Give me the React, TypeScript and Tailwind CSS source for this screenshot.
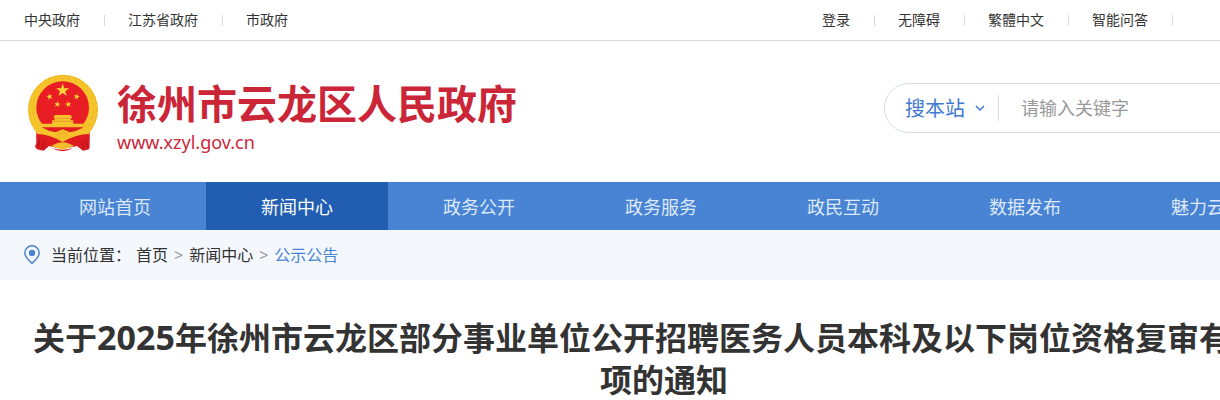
import { useState } from "react";

interface ILink {
  text: string;
  href: string;
}

const leftLinks: ILink[] = [
  { text: "中央政府", href: "#gov" },
  { text: "江苏省政府", href: "#jiangsu" },
  { text: "市政府", href: "#xuzhou" },
];

const rightLinks: ILink[] = [
  { text: "登录", href: "#login" },
  { text: "无障碍", href: "#access" },
  { text: "繁體中文", href: "#hant" },
  { text: "智能问答", href: "#ask" },
];

const navLinks: ILink[] = [
  { text: "网站首页", href: "#home" },
  { text: "新闻中心", href: "#news" },
  { text: "政务公开", href: "#open" },
  { text: "政务服务", href: "#service" },
  { text: "政民互动", href: "#interact" },
  { text: "数据发布", href: "#data" },
  { text: "魅力云龙", href: "#yunlong" },
];

const STAR =
  "M0-10 2.3-3.1 9.5-3.1 3.7 1.2 5.9 8.1 0 3.9-5.9 8.1-3.7 1.2-9.5-3.1-2.3-3.1Z";

// national emblem
const Emblem = () => (
  <svg viewBox="0 0 216 234" className="h-[78px] w-[72px] shrink-0" aria-hidden="true">
    <circle cx="108" cy="107" r="105" fill="#f6c52c" />
    <circle cx="108" cy="107" r="102" fill="none" stroke="#e8b025" strokeWidth="3" strokeDasharray="9 6" />
    <circle cx="108" cy="105" r="91" fill="none" stroke="#e6ad24" strokeWidth="2" strokeDasharray="14 8" />
    <circle cx="107" cy="101" r="79" fill="#e91d24" />
    <g fill="#fbd436">
      <path d={STAR} transform="translate(107 49) scale(2.1)" />
      <path d={STAR} transform="translate(68 68) rotate(-12)" />
      <path d={STAR} transform="translate(149 68) rotate(12)" />
      <path d={STAR} transform="translate(91 91) rotate(10)" />
      <path d={STAR} transform="translate(124 91) rotate(-10)" />
    </g>
    <path d="M84 123h47l5 9h-5v7h8v12H75v-12h8v-7h-4Z" fill="#f6c02b" />
    <path d="M80 133h54M75 142h64" stroke="#d9922a" strokeWidth="2" />
    {/* ribbon */}
    <path d="M28 172 40 162H176L188 172V218L186 226 168 230 150 216Q107 228 66 216L50 230 30 226 24 218 28 206Z" fill="#d91920" />
    <path d="M22 162 38 149H178L194 162 184 182Q150 194 107 207 66 194 32 182Z" fill="#f6c22c" />
    <path d="M44 160H170Q150 172 128 175L107 166 86 175Q64 172 44 160Z" fill="#df1b21" />
    <path d="M30 180Q66 180 107 204 148 180 186 180L188 192Q160 204 142 218L128 206Q107 214 86 206L74 218Q54 204 28 192Z" fill="#df1b21" />
    <path d="M84 188q3-19 23-19t23 19l-9 8q-14-8-28 0Z" fill="#f6bd2a" />
    <path d="M91 185q4-8 16-8t16 8" fill="none" stroke="#d28a1e" strokeWidth="2" strokeDasharray="4 3" />
    <path d="M72 216 90 208q17-6 34 0l18 8-14 4q-21 12-42 0Z" fill="#f3bc2b" />
    <path d="M76 222q31 10 62 0l-14 7q-17 5-34 0Z" fill="#d91920" />
    <path d="M38 196 34 222M50 202 46 224M178 196 182 222M166 202 170 224" stroke="#b5121a" strokeWidth="3" />
  </svg>
);

const PinIcon = () => (
  <svg viewBox="0 0 16 20" className="h-5 w-4 shrink-0" fill="none" aria-hidden="true">
    <path d="M8 18.5C5.2 15.5.8 12 .8 8a7.2 7.2 0 0 1 14.4 0c0 4-4.4 7.5-7.2 10.5Z" stroke="#4983d3" strokeWidth="1.5" />
    <circle cx="8" cy="8" r="3.2" fill="#4983d3" />
  </svg>
);

const App = () => {
  const [scope, setScope] = useState("site");
  const [keyword, setKeyword] = useState("");

  return (
    <div className="overflow-hidden bg-white font-['Noto_Sans','Noto_Sans_CJK_SC',sans-serif] text-[#333]">
      <div className="min-w-[1328px]">
        {/* top bar */}
        <div className="flex h-[41px] items-center justify-between border-b border-[#d8dbdc] px-6 text-sm">
          <ul className="flex items-center">
            {leftLinks.map((item, index) => (
              <li key={item.href} className="flex items-center">
                {index > 0 && <span className="mr-[23px] ml-6 h-[11px] w-px bg-[#d3dae0]" />}
                <a href={item.href}>{item.text}</a>
              </li>
            ))}
          </ul>
          <ul className="flex items-center pr-[108px]">
            {rightLinks.map((item) => (
              <li key={item.href} className="flex items-center">
                <a href={item.href}>{item.text}</a>
                <span className="mr-[23px] ml-6 h-[11px] w-px bg-[#d3dae0]" />
              </li>
            ))}
          </ul>
        </div>

        {/* logo + search */}
        <header className="flex h-[141px] items-start justify-between px-6">
          <a href="#home" className="flex items-start gap-[18px] pt-[33px] pl-[3px] text-[#cb2638]">
            <Emblem />
            <span className="flex flex-col pt-1">
              <span className="text-[40px] leading-[52px] font-bold">徐州市云龙区人民政府</span>
              <span className="text-lg leading-6">www.xzyl.gov.cn</span>
            </span>
          </a>
          <form
            className="mt-[42px] flex h-[50px] w-[420px] items-center rounded-full border border-[#d5dce1] pl-5"
            onSubmit={(e) => e.preventDefault()}
          >
            <label className="relative flex items-center">
              <select
                aria-label="搜索范围"
                value={scope}
                onChange={(e) => setScope(e.target.value)}
                className="w-20 appearance-none bg-transparent pt-0.5 text-xl text-[#3f7ad0] outline-none"
              >
                <option value="site">搜本站</option>
                <option value="all">搜全网</option>
              </select>
              <svg viewBox="0 0 10 6" className="pointer-events-none absolute right-0 h-[6px] w-[10px]" fill="none" aria-hidden="true">
                <path d="m1 1 4 4 4-4" stroke="#3f7ad0" strokeWidth="1.5" />
              </svg>
            </label>
            <span className="ml-[13px] h-[26px] w-px bg-[#d5dce1]" />
            <input
              type="text"
              aria-label="关键字"
              placeholder="请输入关键字"
              value={keyword}
              onChange={(e) => setKeyword(e.target.value)}
              className="ml-[22px] min-w-0 flex-1 bg-transparent text-lg outline-none placeholder:text-[#999]"
            />
          </form>
        </header>

        <nav className="flex h-12 bg-[#4983d3] px-6 text-lg text-[#dde9f8]">
          {navLinks.map((item) => (
            <a
              key={item.href}
              href={item.href}
              className={
                item.text === "新闻中心"
                  ? "flex w-[182px] items-center justify-center bg-[#215eb1] pt-px text-white"
                  : "flex w-[182px] items-center justify-center pt-px"
              }
            >
              {item.text}
            </a>
          ))}
        </nav>

        {/* breadcrumb */}
        <div className="flex h-[50px] items-center bg-[#f4f8fd] px-6">
          <PinIcon />
          <span className="ml-[11px]">当前位置：</span>
          <div className="ml-[5px] flex items-center gap-[6px]">
            <a href="#home">首页</a>
            <span className="text-[#999]">&gt;</span>
            <a href="#news">新闻中心</a>
            <span className="text-[#999]">&gt;</span>
            <a href="#notice" className="text-[#4983d3]">公示公告</a>
          </div>
        </div>

        <main className="px-6 pt-9">
          <h1 className="text-center text-[32px] leading-[42px] font-bold">
            关于<span className="text-[34px]">2025</span>年徐州市云龙区部分事业单位公开招聘医务人员本科及以下岗位资格复审有关事项的通知
          </h1>
        </main>
      </div>
    </div>
  );
};

export default App;
